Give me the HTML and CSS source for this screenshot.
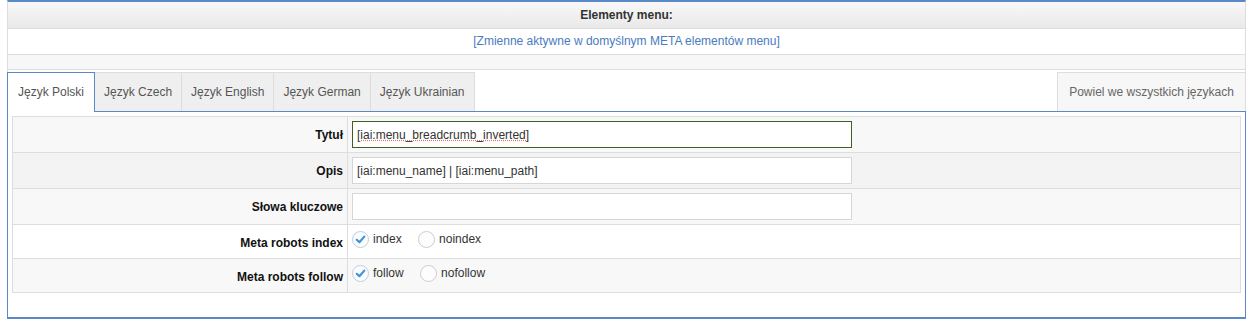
FILE: index.html
```html
<!DOCTYPE html>
<html lang="pl">

<head>
  <meta charset="UTF-8">
  <meta name="viewport" content="width=device-width, initial-scale=1.0">
  <title>Elementy menu</title>
  <link rel="stylesheet" href="styles.css">
</head>

<body>
  <div class="box">
    <div class="box-head">Elementy menu:</div>
    <div class="box-sub">
      <a href="#">[Zmienne aktywne w domyślnym META elementów menu]</a>
    </div>
    <div class="box-strip"></div>

    <div class="tabs">
      <div class="tab active">Język Polski</div>
      <div class="tab">Język Czech</div>
      <div class="tab">Język English</div>
      <div class="tab">Język German</div>
      <div class="tab">Język Ukrainian</div>
      <div class="tab tab-copy">Powiel we wszystkich językach</div>
    </div>

    <div class="panel">
      <table class="form">
        <tr class="row-light">
          <th>Tytuł</th>
          <td><input type="text" class="field focused" value="[iai:menu_breadcrumb_inverted]"></td>
        </tr>
        <tr class="row-dark">
          <th>Opis</th>
          <td><input type="text" class="field" value="[iai:menu_name] | [iai:menu_path]"></td>
        </tr>
        <tr class="row-light">
          <th>Słowa kluczowe</th>
          <td><input type="text" class="field" value=""></td>
        </tr>
        <tr class="row-white radio-row">
          <th>Meta robots index</th>
          <td>
            <label class="radio">
              <svg class="radio-icon" width="17" height="17" viewBox="0 0 17 17">
                <circle cx="8.5" cy="8.5" r="8" fill="#fafcfe" stroke="#b9cfe4"/>
                <path d="M4.8 8.8 L7.4 11.2 L12.3 5.6" fill="none" stroke="#3f93d6" stroke-width="2.2" stroke-linecap="round" stroke-linejoin="round"/>
              </svg>
              index
            </label>
            <label class="radio">
              <svg class="radio-icon" width="17" height="17" viewBox="0 0 17 17">
                <circle cx="8.5" cy="8.5" r="8" fill="#fdfdfd" stroke="#cccccc"/>
              </svg>
              noindex
            </label>
          </td>
        </tr>
        <tr class="row-light radio-row">
          <th>Meta robots follow</th>
          <td>
            <label class="radio">
              <svg class="radio-icon" width="17" height="17" viewBox="0 0 17 17">
                <circle cx="8.5" cy="8.5" r="8" fill="#fafcfe" stroke="#b9cfe4"/>
                <path d="M4.8 8.8 L7.4 11.2 L12.3 5.6" fill="none" stroke="#3f93d6" stroke-width="2.2" stroke-linecap="round" stroke-linejoin="round"/>
              </svg>
              follow
            </label>
            <label class="radio">
              <svg class="radio-icon" width="17" height="17" viewBox="0 0 17 17">
                <circle cx="8.5" cy="8.5" r="8" fill="#fdfdfd" stroke="#cccccc"/>
              </svg>
              nofollow
            </label>
          </td>
        </tr>
      </table>
    </div>
  </div>
</body>

</html>
```

FILE: styles.css
```css
* {
  box-sizing: border-box;
}

body {
  margin: 0 5px 0 7px;
  font-family: "Liberation Sans", Arial, sans-serif;
  font-size: 12px;
  color: #333;
  background: #fff;
}

.box {
  border-top: 2px solid #5b88c6;
  border-left: 1px solid #ddd;
  border-right: 1px solid #ddd;
}

.box-head {
  height: 27px;
  line-height: 26px;
  text-align: center;
  font-weight: bold;
  color: #333;
  background: linear-gradient(#f8f8f8, #e9e9e9);
  border-bottom: 1px solid #ddd;
}

.box-sub {
  height: 26px;
  line-height: 25px;
  text-align: center;
  border-bottom: 1px solid #ddd;
}

.box-sub a {
  color: #4a7bbe;
  text-decoration: none;
}

.box-strip {
  height: 15px;
  background: #f7f7f7;
  border-bottom: 1px solid #ddd;
}

.tabs {
  display: flex;
  padding-top: 2px;
}

.tab {
  height: 39px;
  line-height: 38px;
  padding: 0 9px;
  background: #efefef;
  color: #555;
  border-top: 1px solid #ddd;
  border-right: 1px solid #ddd;
}

.tab.active {
  position: relative;
  z-index: 1;
  height: 40px;
  margin-bottom: -1px;
  margin-left: -1px;
  padding: 0 10px 1px 10px;
  background: #fff;
  border: 1px solid #5b88c6;
  border-bottom: none;
}

.tab-copy {
  margin-left: auto;
  width: 188px;
  padding: 0;
  text-align: center;
  background: #f7f7f7;
  color: #666;
  border-left: 1px solid #ddd;
  border-right: none;
}

.panel {
  margin: 0 -1px;
  padding: 4px 4px 24px 4px;
  border: 1px solid #5b88c6;
  border-bottom-width: 2px;
}

.form {
  width: 100%;
  border-collapse: collapse;
  border: 1px solid #ddd;
}

.form th,
.form td {
  border: 1px solid #ddd;
  padding: 4px;
}

.form th {
  width: 335px;
  text-align: right;
  font-weight: bold;
  color: #111;
  padding-right: 4px;
}

.row-light {
  background: #f8f8f8;
}

.row-dark {
  background: #f3f3f3;
}

.row-white {
  background: #fff;
}

.field {
  display: block;
  width: 500px;
  height: 27px;
  padding: 0 4px;
  border: 1px solid #d6d6d6;
  background: #fff;
  font-family: "Liberation Sans", Arial, sans-serif;
  font-size: 12px;
  color: #333;
  outline: none;
}

.field.focused {
  border-color: #3d5f20;
  text-decoration-line: underline;
  text-decoration-style: dotted;
  text-decoration-color: #e5735a;
}

.radio-row td {
  height: 34px;
  padding: 4px 4px 6px 4px;
}

.radio-row th {
  padding-top: 6px;
}

.radio {
  display: inline-flex;
  align-items: center;
  margin-right: 13px;
  color: #333;
  cursor: pointer;
}

.radio-icon {
  margin-right: 4px;
}
```
